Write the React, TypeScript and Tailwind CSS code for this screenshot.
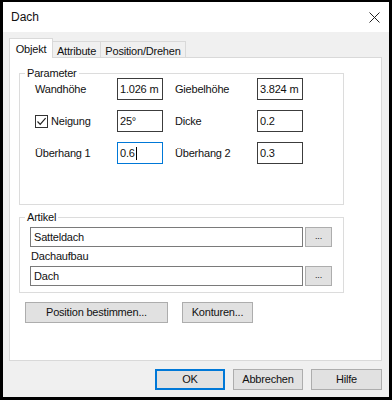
import React from "react";

const ParamInput = ({ value, focused }: { value: string; focused?: boolean }) => (
  <div
    className={
      focused
        ? "flex h-[22px] w-[46px] items-center border border-[#0078d7] bg-white pl-[2px]"
        : "flex h-[22px] w-[46px] items-center border border-[#3c3c3c] bg-white pl-[2px]"
    }
  >
    <span>{value}</span>
    {focused && <span className="ml-[1px] h-[13px] w-px bg-black" />}
  </div>
);

const WinButton = ({ label, width, def }: { label: string; width: string; def?: boolean }) => (
  <div
    className={
      "flex h-[21px] items-center justify-center bg-[#e1e1e1] " +
      width +
      (def ? " border-2 border-[#0078d7]" : " border border-[#adadad]")
    }
  >
    {label}
  </div>
);

const App = () => {
  return (
    <div className="flex h-[400px] w-[392px] flex-col border-x-[3px] border-t-2 border-b-[3px] border-black bg-[#f0f0f0] font-['Liberation_Sans',Arial,sans-serif] text-[11px] leading-[13px] tracking-[-0.2px] text-[#111]">
      <div className="flex h-[30px] shrink-0 items-center justify-between bg-white pl-[8px] pr-[9px]">
        <span className="text-[12px] tracking-normal">Dach</span>
        <svg width="11" height="11" viewBox="0 0 11 11">
          <path d="M0.5 0.5 L10.5 10.5 M10.5 0.5 L0.5 10.5" stroke="#222" strokeWidth="1" />
        </svg>
      </div>

      <div className="flex flex-1 flex-col pl-[6px] pr-[7px] pt-[6px]">
        {/* tabs */}
        <div className="flex h-[19px] items-end">
          <div className="relative z-10 -mb-px flex h-[20px] w-[44px] items-center justify-center border border-b-0 border-[#d9d9d9] bg-white pt-[2px]">
            Objekt
          </div>
          <div className="flex h-[16px] w-[48px] items-center justify-center border border-b-0 border-l-0 border-[#d9d9d9] pt-[3px]">
            Attribute
          </div>
          <div className="flex h-[16px] w-[85px] items-center justify-center border border-b-0 border-l-0 border-[#d9d9d9] pt-[3px]">
            Position/Drehen
          </div>
        </div>

        {/* panel */}
        <div className="flex h-[304px] w-[373px] flex-col border border-[#d9d9d9] bg-white pl-[9px]">
          <fieldset className="mt-[9px] h-[138px] w-[325px] border border-[#dcdcdc]">
            <legend className="ml-[5px] px-[2px] leading-[12px]">Parameter</legend>
            <div className="-mt-px grid grid-cols-[82px_58px_82px_46px] gap-y-[10px] pl-[15px]">
              <div className="flex items-center">Wandhöhe</div>
              <ParamInput value="1.026 m" />
              <div className="flex items-center">Giebelhöhe</div>
              <ParamInput value="3.824 m" />

              <div className="flex items-center">
                <div className="flex h-[13px] w-[13px] items-center justify-center border border-[#333] bg-white">
                  <svg width="11" height="11" viewBox="0 0 11 11">
                    <path d="M1.5 5.5 L4.2 8.3 L9.6 2.2" fill="none" stroke="#222" strokeWidth="1.2" />
                  </svg>
                </div>
                <span className="ml-[3px]">Neigung</span>
              </div>
              <ParamInput value="25°" />
              <div className="flex items-center">Dicke</div>
              <ParamInput value="0.2" />

              <div className="flex items-center">Überhang 1</div>
              <ParamInput value="0.6" focused />
              <div className="flex items-center">Überhang 2</div>
              <ParamInput value="0.3" />
            </div>
          </fieldset>

          <fieldset className="mt-[6px] h-[82px] w-[325px] border border-[#dcdcdc]">
            <legend className="ml-[5px] px-[2px] leading-[12px]">Artikel</legend>
            <div className="flex flex-col pl-[10px] pt-[4px]">
              <div className="flex">
                <div className="flex h-[20px] w-[273px] items-center border border-[#7a7a7a] pl-[3px]">Satteldach</div>
                <div className="ml-[2px] flex h-[20px] w-[27px] items-end justify-center border border-[#adadad] bg-[#e1e1e1] pb-[3px] text-[9px]">
                  ...
                </div>
              </div>
              <div className="flex h-[19px] items-center pl-px">Dachaufbau</div>
              <div className="flex">
                <div className="flex h-[20px] w-[273px] items-center border border-[#7a7a7a] pl-[3px]">Dach</div>
                <div className="ml-[2px] flex h-[20px] w-[27px] items-end justify-center border border-[#adadad] bg-[#e1e1e1] pb-[3px] text-[9px]">
                  ...
                </div>
              </div>
            </div>
          </fieldset>

          <div className="ml-[6px] mt-[9px] flex gap-[14px]">
            <WinButton label="Position bestimmen..." width="w-[143px]" />
            <WinButton label="Konturen..." width="w-[71px]" />
          </div>
        </div>

        {/* dialog buttons */}
        <div className="mt-[8px] flex justify-end gap-[8px]">
          <WinButton label="OK" width="w-[70px]" def />
          <WinButton label="Abbrechen" width="w-[70px]" />
          <WinButton label="Hilfe" width="w-[71px]" />
        </div>
      </div>
    </div>
  );
};

export default App;
